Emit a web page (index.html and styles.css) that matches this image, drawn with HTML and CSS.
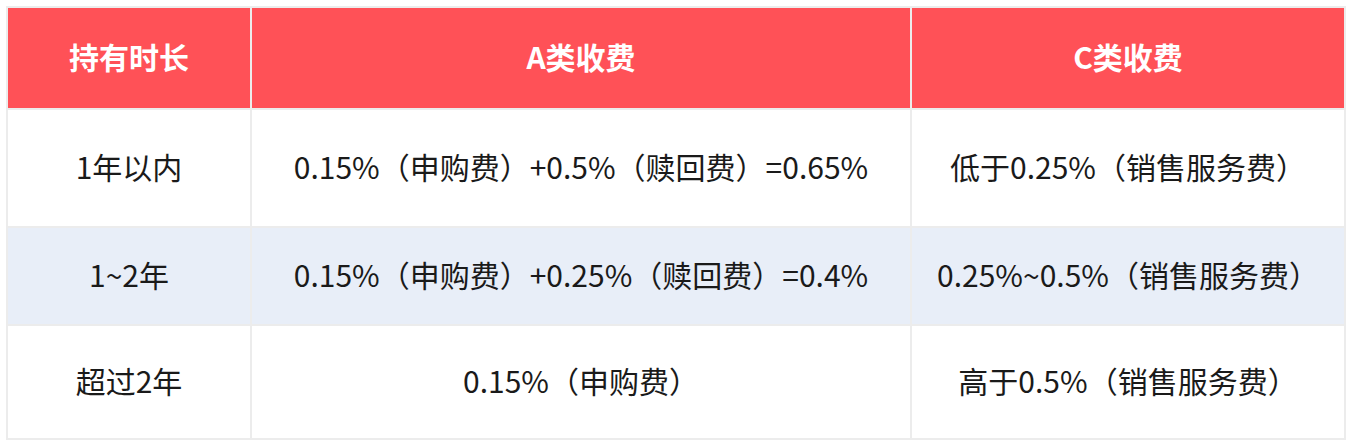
FILE: index.html
```html
<!DOCTYPE html>
<html lang="zh">
<head>
<meta charset="utf-8">
<link rel="stylesheet" href="styles.css">
</head>
<body>
<table class="fee">
  <colgroup>
    <col class="c1"><col class="c2"><col class="c3">
  </colgroup>
  <thead>
    <tr class="head"><th>持有时长</th><th>A类收费</th><th>C类收费</th></tr>
  </thead>
  <tbody>
    <tr class="r1"><td>1年以内</td><td>0.15%（申购费）+0.5%（赎回费）=0.65%</td><td>低于0.25%（销售服务费）</td></tr>
    <tr class="r2 alt"><td>1~2年</td><td>0.15%（申购费）+0.25%（赎回费）=0.4%</td><td>0.25%~0.5%（销售服务费）</td></tr>
    <tr class="r3"><td>超过2年</td><td>0.15%（申购费）</td><td>高于0.5%（销售服务费）</td></tr>
  </tbody>
</table>
</body>
</html>
```
FILE: styles.css
```css
html, body { margin: 0; padding: 0; background: #fff; }
body { padding: 6px 6px 0 6px; }
.fee {
  border-collapse: collapse;
  width: 1338px;
  table-layout: fixed;
  font-family: "Noto Sans CJK SC", "Noto Sans", sans-serif;
  font-size: 30px;
  color: #1a1a1a;
}
.c1 { width: 244px; }
.c2 { width: 660px; }
.c3 { width: 434px; }
.fee th, .fee td {
  border: 2px solid #ececec;
  text-align: center;
  padding: 0 0 4px 0;
}
.head th {
  background: #ff5157;
  color: #fff;
  font-weight: 700;
  height: 96px;
  border-color: #ececec;
}
.r1 td { height: 112px; }
.r2 td { height: 92px; }
.r3 td { height: 108px; }
.alt td { background: #e8eef8; }
```
